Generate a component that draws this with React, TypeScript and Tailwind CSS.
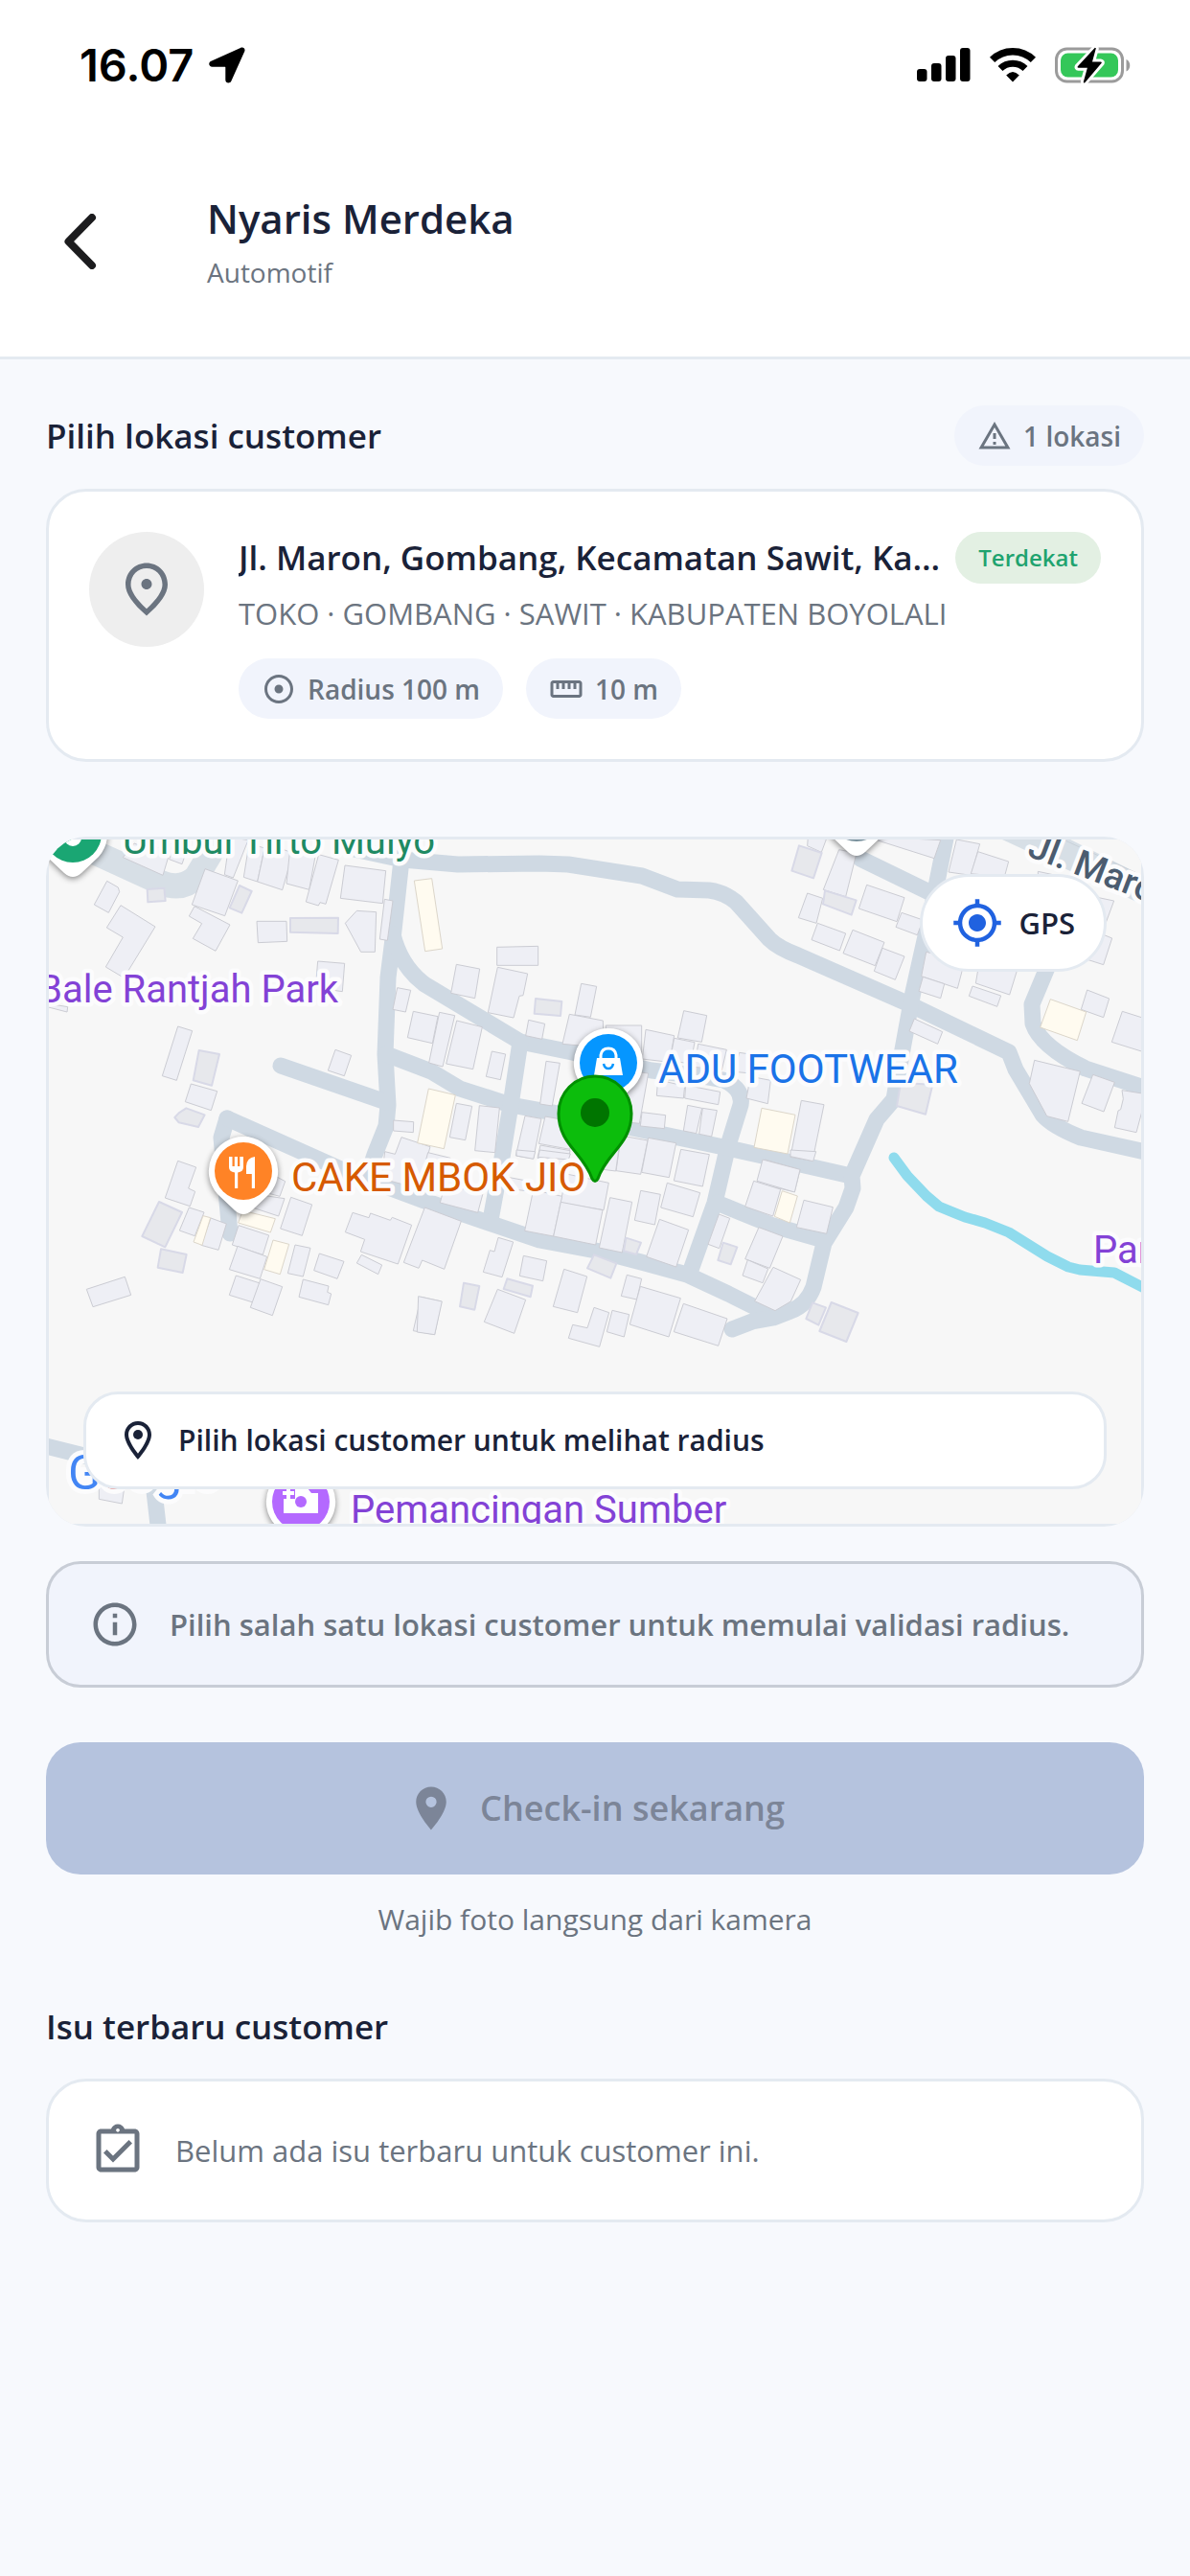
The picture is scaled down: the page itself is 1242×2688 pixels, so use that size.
import type { ReactNode } from "react";
import {
  MdGpsFixed,
  MdInfoOutline,
  MdLocationOn,
  MdOutlineAdjust,
  MdOutlineAssignmentTurnedIn,
  MdOutlineFmdGood,
  MdOutlineLocationOn,
  MdOutlineStraighten,
  MdOutlineWarningAmber,
} from "react-icons/md";

/* ---------- status bar ---------- */

function StatusBar() {
  return (
    <div className="flex h-[132px] items-start justify-between pt-[44px] pr-[61px] pl-[83px] text-black">
      <div className="flex h-12 items-center gap-4 font-[Inter,sans-serif] text-[47px] leading-[48px] font-semibold">
        <span>16.07</span>
        <svg viewBox="0 0 38 38" className="size-[38px]" fill="currentColor" aria-hidden="true">
          <path d="M33 .9C35.700-.4 38.300 1.500 37.300 4.600L23.400 35.500C22 38.600 17.300 38 17.300 34.300V21.300Q17.300 20.800 16.800 20.800H3.600C-.3 20.800-1 16.300 2.400 14.800Z" />
        </svg>
      </div>
      <div className="flex h-12 items-center gap-5">
        <svg viewBox="0 0 56 38" className="h-[38px] w-[56px]" fill="currentColor" aria-hidden="true">
          <rect x="0" y="23" width="10.500" height="13" rx="3" />
          <rect x="15" y="17" width="10.500" height="19" rx="3" />
          <rect x="30" y="9" width="10.500" height="27" rx="3" />
          <rect x="45" y="1" width="10.500" height="35" rx="3" />
        </svg>
        <svg viewBox="0 0 48 38" className="h-[38px] w-[48px]" fill="none" stroke="currentColor" aria-hidden="true">
          <path d="M2.600 13.400A30.500 30.500 0 0 1 45.400 13.400" strokeWidth="7.500" />
          <path d="M11 22.600A18.500 18.500 0 0 1 37 22.600" strokeWidth="7" />
          <path d="M24 36.500 17.200 29.600Q24 22.500 30.800 29.600Z" fill="currentColor" stroke="none" />
        </svg>
        <svg viewBox="0 0 80 38" className="h-[38px] w-[80px]" aria-hidden="true">
          <rect x="1.500" y="2" width="69" height="34" rx="11" fill="none" stroke="#9b9b9b" strokeWidth="3" />
          <path d="M74.500 13c5 2 5 10.500 0 12.500z" fill="#9b9b9b" />
          <rect x="6" y="6.500" width="60" height="25" rx="7.500" fill="#34c759" />
          <path
            d="M42.200.8 23.800 20.300q-.8 1.400.8 1.500h9.300L29.800 36q.3 1.800 1.700.5l17-19.400q.9-1.500-.9-1.700h-8.600L42.800 1.700z"
            stroke="#fff"
            strokeWidth="6"
            strokeLinejoin="round"
          />
          <path d="M41.800.8 23.800 20.300q-.8 1.400.8 1.500h9.300L29.800 36.500q.3 1.800 1.700.5l17-19.900q.9-1.500-.9-1.700h-8.600L42.900 1.300z" />
        </svg>
      </div>
    </div>
  );
}

/* ---------- map drawing ---------- */

const TILE = 1 / 3;

type Lot = { x: number; y: number; home?: string[]; shed?: string[]; shop?: string[] };

// Building outlines, grouped by block; every block has its own origin and is drawn at a third of its size.
const LOTS: Lot[] = [
  {
    x: 40,
    y: 860,
    home: [
      "215,178 250,198 254,212 220,277 175,252",
      "258,254 366,321 268,481 211,447 265,354 214,324",
      "522,140 625,177 584,287 481,252",
      "489,257 600,315 555,397 484,358 512,311 472,288",
      "600,40 657,50 610,168 583,158",
      "660,60 708,75 686,180 643,166",
      "712,60 797,90 764,206 686,180",
      "790,60 870,85 848,205 777,186",
      "878,95 940,112 900,250 882,245 877,255 838,243",
      "960,129 1088,146 1078,248 946,232",
      "997,271 1058,275 1054,400 1010,400 961,310",
      "1084,235 1110,240 1093,364 1069,360",
      "684,304 777,304 779,367 688,371",
      "875,429 959,436 952,524 868,512",
      "437,633 482,647 433,802 388,788",
      "478,813 560,836 541,896 460,869",
      "930,706 980,724 958,788 907,771",
      "437,1054 494,1074 470,1140 491,1150 475,1196 397,1170",
      "20,560 92,572 90,588 20,570",
      "300,60 352,80 420,60 390,160 265,104",
      "410,110 450,125 460,95 420,80",
      "1112,927 1175,932 1174,965 1112,960",
      "1137,980 1227,1010 1190,1140 1075,1110 1085,1025 1117,1033",
    ],
    shed: [
      "341,204 394,200 398,240 343,244",
      "630,192 668,210 637,278 599,262",
      "789,294 939,293 938,342 789,338",
      "503,708 567,720 543,818 485,802",
      "427,918 440,904 463,889 521,910 501,948 440,934",
    ],
    shop: ["1177,177 1232,170 1265,390 1211,398"],
  },
  {
    x: 400,
    y: 860,
    home: [
      "229,439 302,453 287,545 212,529",
      "358,448 452,468 438,536 426,538 408,606 328,590",
      "356,385 485,382 485,442 356,442",
      "455,613 506,625 497,673 446,662",
      "620,499 668,508 649,604 600,597",
      "583,595 688,615 690,700 561,688",
      "697,630 809,630 809,740 697,740",
      "822,643 911,662 896,745 811,735",
      "941,584 1013,599 997,682 922,669",
      "911,670 975,683 962,750 898,740",
      "986,688 1075,706 1060,770 975,760",
      "1115,715 1160,722 1150,780 1100,775",
      "1150,790 1213,802 1204,875 1137,858",
      "44,512 86,520 70,588 30,580",
      "94,586 171,602 154,686 76,668",
      "176,589 224,599 186,759 143,747",
      "230,615 310,635 281,767 197,750",
      "340,711 383,720 367,800 322,790",
      "510,742 553,748 529,882 491,876",
      "229,874 278,883 257,989 208,980",
      "301,881 364,888 350,1028 287,1022",
      "444,913 495,922 470,1047 415,1038",
      "507,915 590,930 585,1018 487,1000",
      "492,1005 585,1022 575,1080 483,1045",
      "860,800 944,820 940,858 856,850",
      "947,817 1055,838 1049,878 944,858",
      "953,880 998,889 980,968 940,960",
      "1000,889 1045,896 1028,978 989,970",
      "750,770 830,780 802,937 740,930",
      "810,902 884,911 880,953 805,945",
      "745,975 828,990 806,1096 729,1085",
      "830,982 917,998 895,1106 809,1090",
      "932,1018 1021,1034 1000,1134 910,1116",
      "690,1000 740,1000 728,1086 680,1080",
      "140,1028 210,1045 190,1110 120,1100",
      "574,1095 706,1123 690,1208 555,1185",
      "390,1105 470,1120 465,1150 380,1140",
    ],
    shed: ["477,546 559,555 555,600 473,593"],
    shop: ["142,828 226,848 190,1016 107,998", "1185,889 1290,910 1266,1032 1161,1012"],
  },
  {
    x: 800,
    y: 860,
    home: [
      "227,80 282,90 248,227 178,205",
      "130,40 188,45 172,88 128,68",
      "314,190 432,230 408,305 289,264",
      "128,216 176,232 156,310 100,293",
      "160,310 248,342 229,396 141,362",
      "270,331 369,370 340,443 240,404",
      "363,388 432,414 403,487 337,460",
      "423,277 490,300 472,347 405,322",
      "350,40 545,50 525,107 345,50",
      "595,48 668,62 640,160 570,150",
      "662,86 758,117 745,165 640,155",
      "500,400 620,430 598,514 485,476",
      "490,478 557,500 545,545 477,523",
      "665,440 790,440 761,534 655,498",
      "645,507 734,537 722,571 634,538",
      "1004,519 1073,546 1055,605 985,580",
      "1114,586 1190,610 1190,716 1081,682",
      "839,739 982,774 944,931 878,914 823,812",
      "1022,784 1090,808 1056,900 987,874",
      "1113,833 1190,845 1158,965 1090,950 1101,897 1109,893 1117,860",
      "463,609 551,650 536,688 447,648",
      "109,865 180,878 144,1054 75,1042",
      "1040,340 1082,357 1055,440 1005,424",
      "1040,230 1088,240 1062,310 1020,300",
      "850,148 930,165 930,200 850,200",
      "-5,1050 105,1082 88,1151 -30,1125",
    ],
    shed: [
      "102,67 173,90 147,169 79,146",
      "183,208 281,238 266,284 177,250",
      "420,810 520,815 498,908 408,882",
    ],
    shop: ["889,548 1001,588 973,677 857,636"],
  },
  {
    x: 40,
    y: 1200,
    home: [
      "472,180 519,195 490,269 442,252",
      "540,213 589,231 564,313 510,298",
      "791,148 857,171 826,268 758,246",
      "720,70 773,98 756,145 700,130",
      "690,140 771,152 752,207 670,180",
      "627,236 722,267 703,328 607,297",
      "624,301 716,334 694,403 598,374",
      "619,393 694,417 672,477 598,454",
      "696,404 764,428 733,518 664,493",
      "804,297 852,307 829,396 781,386",
      "880,324 957,349 936,403 863,377",
      "829,405 909,426 905,445 917,450 908,485 816,460",
      "151,436 271,397 290,454 171,491",
      "984,196 1035,212 1040,198 1102,220 1108,211 1169,235 1126,357 1009,318 1022,280 961,257",
      "1012,328 1076,360 1064,389 997,354",
      "1198,460 1262,474 1241,578 1174,566",
      "190,1050 268,1065 262,1107 190,1093",
    ],
    shed: ["378,162 450,195 397,304 325,270", "384,310 464,327 452,384 374,368"],
    shop: ["516,206 539,212 513,298 486,288", "640,190 742,215 727,258 626,228", "735,282 785,295 757,389 707,374"],
  },
  {
    x: 440,
    y: 1200,
    home: [
      "10,180 124,223 71,373 2,345 -9,370 -56,352",
      "240,274 287,288 252,398 193,382 214,314 228,318",
      "319,331 392,347 380,410 307,394",
      "446,373 518,396 488,509 412,490",
      "643,391 689,403 674,468 625,457",
      "685,427 811,464 774,585 652,546",
      "820,481 957,528 929,613 790,569",
      "238,436 326,469 290,574 196,538",
      "540,493 587,509 557,616 460,589 473,547 519,557",
      "597,502 650,515 634,585 580,569",
      "-10,458 64,474 41,578 -14,570",
      "350,125 440,145 413,270 323,253",
      "436,163 567,188 545,297 413,270",
      "590,149 659,163 628,321 556,306",
      "686,127 748,139 730,234 667,220",
      "769,103 872,134 850,209 749,180",
      "745,217 836,250 797,366 704,334",
      "70,120 195,125 176,196 58,165",
      "1068,30 1185,61 1168,132 1050,97",
      "1040,97 1124,123 1100,207 1013,177",
      "1197,157 1288,179 1268,262 1174,242",
      "931,201 965,214 932,308 897,295",
      "1056,242 1131,270 1090,370 1013,341",
      "1021,344 1085,372 1068,416 1005,393",
      "1101,367 1187,406 1156,474 1107,503 1043,473",
      "1155,0 1235,5 1226,35 1155,20",
      "297,0 356,5 350,28 297,18",
      "370,0 466,12 460,30 365,22",
    ],
    shed: [
      "132,416 181,426 166,500 120,490",
      "268,403 348,425 341,460 257,435",
      "640,275 687,290 672,327 633,316",
      "540,328 610,355 592,401 519,370",
      "944,290 988,304 968,358 928,345",
      "1224,478 1266,493 1243,548 1204,528",
      "1283,477 1367,510 1330,600 1246,567",
    ],
    shop: ["1129,128 1177,144 1153,228 1105,208"],
  },
];

const ROADS = [
  "M360 884 420 897 478 902 563 901 593 902 670 914 707 928 740 929Q756 931 768 941L803 980Q812 989 833 997L947 1047 1053 1098 1060 1116 1088 1163Q1098 1175 1128 1187L1200 1203",
  "M419 897 410 980 405 1020 402 1100 405 1153 403 1175 391 1205 384 1226",
  "M410 975Q418 1008 443 1027L493 1057 543 1087 597 1098 680 1117 733 1123 755 1127Q776 1136 773 1153L760 1195 746 1255 720 1328",
  "M403 1100 450 1118 480 1136 533 1153 583 1162 660 1177 760 1198 800 1207 888 1227",
  "M543 1087 533 1153 524 1208 512 1273",
  "M237 1167 231 1187 240 1287",
  "M237 1167 340 1213 360 1222 443 1253 507 1275 563 1294 627 1306 673 1318 717 1330 760 1350 800 1370",
  "M293 1112 403 1150",
  "M988 870 972 950 953 1035 942 1095 933 1147 915 1168 889 1227 890 1240 883 1260 860 1297 849 1343Q842 1362 825 1368L807 1375 785 1379 764 1387",
  "M748 1255 807 1279 860 1294",
  "M898 896 972 932",
  "M1100 993 1077 1048 1078 1068Q1086 1092 1133 1115L1200 1137",
  "M40 1507 100 1522 150 1540",
  "M158 1530 166 1600",
];

function Buildings({ lot }: { lot: Lot }) {
  return (
    <g transform={`translate(${lot.x} ${lot.y}) scale(${TILE})`}>
      <g fill="#eeeff5" stroke="#cbccd3" strokeWidth="3">
        {lot.home?.map((p) => <polygon key={p} points={p} />)}
      </g>
      <g fill="#e7e8ec" stroke="#d8d9e7" strokeWidth="6" strokeLinejoin="round">
        {lot.shed?.map((p) => <polygon key={p} points={p} />)}
      </g>
      <g fill="#fffbf0" stroke="#dcd6ca" strokeWidth="3">
        {lot.shop?.map((p) => <polygon key={p} points={p} />)}
      </g>
    </g>
  );
}

function PlacePin({ x, y, color, children }: { x: number; y: number; color: string; children?: ReactNode }) {
  return (
    <g transform={`translate(${x} ${y})`}>
      <path
        d="M0-36A36 36 0 0 1 27 24L9 41Q0 49-9 41L-27 24A36 36 0 0 1 0-36Z"
        fill="#fff"
        className="drop-shadow-[0_2px_3px_rgba(0,0,0,0.45)]"
      />
      <circle r="30" fill={color} />
      {children}
    </g>
  );
}

function MapLabel({ x, y, color, children }: { x: number; y: number; color: string; children: string }) {
  return (
    <text x={x} y={y} fill={color} stroke="#fcfcfd" strokeWidth="9" strokeLinejoin="round" paintOrder="stroke">
      {children}
    </text>
  );
}

function MapDrawing() {
  return (
    <svg
      viewBox="51 876 1140 714"
      preserveAspectRatio="xMidYMid slice"
      className="block h-full w-full bg-[#f7f7f7] font-[Roboto,sans-serif] text-[40px]"
      role="img"
      aria-label="Peta lokasi customer"
    >
      <path d="M100 890 168 921Q190 930 205 915L232 870" fill="none" stroke="#d7dfe6" strokeWidth="26" />
      <path d="M1033 870H1105L1195 915V945Z" fill="#d7dfe6" />
      <path d="M1105 874 1195 915" stroke="#c9d1d9" />
      <g fill="none" stroke="#cfd9e3" strokeWidth="17" strokeLinecap="round" strokeLinejoin="round">
        {ROADS.map((d) => (
          <path key={d} d={d} />
        ))}
      </g>
      <path
        d="M933 1208 947 1227 967 1248 980 1259 1007 1270 1028 1276 1053 1286 1093 1311 1115 1322 1127 1325 1163 1328 1200 1347"
        fill="none"
        stroke="#8fdbed"
        strokeWidth="11"
        strokeLinecap="round"
        strokeLinejoin="round"
      />
      {LOTS.map((lot) => (
        <Buildings key={`${lot.x}-${lot.y}`} lot={lot} />
      ))}

      <PlacePin x={76} y={870} color="#1aa673">
        <circle cy="4" r="9" fill="#fff" />
      </PlacePin>
      <PlacePin x={894} y={848} color="#78909c" />
      <PlacePin x={314} y={1567} color="#b469ff">
        <path d="M-18-9H-6V-14H7L11-9H18V12H-18Z" fill="#fff" />
        <circle r="6" fill="#b469ff" />
        <path d="M-20-16H-6V-3H-20Z" fill="#b469ff" />
        <path d="M-15-15H-11V-11H-7V-7H-11V-3H-15V-7H-19V-11H-15Z" fill="#fff" />
      </PlacePin>
      <PlacePin x={254} y={1222} color="#ff8326">
        <path
          d="M-15-15h3.500v10h2.300v-10h3.200v10h2.300v-10H0V-4Q0 .5-5.800 1.500V18h-3.200V1.500Q-15 .5-15-4ZM12-15V18H8.800V3H3V-5Q3.500-14 12-15Z"
          fill="#fff"
        />
      </PlacePin>
      <PlacePin x={635} y={1109} color="#0596ff">
        <path d="M-12-5H12L15 13H-15Z" fill="#fff" />
        <path d="M-8-5V-8Q-7-15 0-15T8-8V-5" fill="none" stroke="#fff" strokeWidth="3" />
        <path d="M-5 1Q-4 6 0 6T5 1" fill="none" stroke="#0596ff" strokeWidth="2.500" />
      </PlacePin>

      <MapLabel x={128} y={891} color="#1f8a63">Umbul Tirto Mulyo</MapLabel>
      <MapLabel x={40} y={1046} color="#8342d6">Bale Rantjah Park</MapLabel>
      <MapLabel x={1141} y={1318} color="#8342d6">Pancingan</MapLabel>
      <MapLabel x={366} y={1589} color="#8342d6">Pemancingan Sumber</MapLabel>
      <g className="text-[42px]">
        <MapLabel x={687} y={1130} color="#1a73e8">ADU FOOTWEAR</MapLabel>
        <MapLabel x={304} y={1243} color="#d65a00">CAKE MBOK JIO</MapLabel>
      </g>
      <g transform="rotate(21 1072 893)" className="text-[38px] font-medium">
        <MapLabel x={1071} y={893} color="#4b5c70">Jl. Maron</MapLabel>
      </g>

      <path
        d="M621 1123C642 1123 659 1140 659 1162 659 1194 633 1203 624 1230Q621 1235 618 1230C609 1203 583 1194 583 1162 583 1140 600 1123 621 1123Z"
        fill="#0cbd0c"
        stroke="#009000"
        strokeWidth="3"
      />
      <circle cx="621" cy="1161" r="15" fill="#007500" />

      <text x="71" y="1554" className="text-[50px]" stroke="#fcfcfd" strokeWidth="10" paintOrder="stroke">
        <tspan fill="#4285f4">G</tspan>
        <tspan fill="#ea4335">o</tspan>
        <tspan fill="#fbbc04">o</tspan>
        <tspan fill="#4285f4">g</tspan>
        <tspan fill="#34a853">l</tspan>
        <tspan fill="#ea4335">e</tspan>
      </text>
    </svg>
  );
}

/* ---------- page ---------- */

function Chip({ icon, children }: { icon: ReactNode; children: string }) {
  return (
    <span className="flex h-[63px] items-center gap-3 rounded-full bg-[#f1f4fc] px-6 text-[28px] leading-9 font-semibold whitespace-nowrap text-[#6b7480]">
      {icon}
      <span>{children}</span>
    </span>
  );
}

export default function App() {
  return (
    <div className="min-h-screen bg-[#f7f9fd] font-['Open_Sans',sans-serif] text-[#1a2238]">
      <header className="border-b-[3px] border-[#e4eaf1] bg-white">
        <StatusBar />
        <div className="flex h-[240px] items-center gap-[84px] pl-[36px]">
          <button type="button" aria-label="Kembali" className="flex size-24 items-center justify-center">
            <svg viewBox="0 0 34 58" className="h-[58px] w-[34px]" fill="none" stroke="#1c1c1e" strokeWidth="8" strokeLinecap="round" strokeLinejoin="round" aria-hidden="true">
              <path d="M29 4 4.500 29 29 54" />
            </svg>
          </button>
          <div>
            <h1 className="text-[42px] leading-[64px] font-semibold">Nyaris Merdeka</h1>
            <p className="text-[28px] leading-[48px] text-[#6b7480]">Automotif</p>
          </div>
        </div>
      </header>

      <main className="px-12 pt-12 pb-24">
        <div className="flex items-center justify-between">
          <h2 className="text-[35px] leading-[48px] font-semibold">Pilih lokasi customer</h2>
          <Chip icon={<MdOutlineWarningAmber className="size-9" />}>1 lokasi</Chip>
        </div>

        <button
          type="button"
          className="mt-6 flex w-full items-start gap-9 rounded-[42px] border-[3px] border-[#e4eaf1] bg-white p-[42px] text-left"
        >
          <span className="flex size-[120px] shrink-0 items-center justify-center rounded-full bg-[#eeeeee] text-[#6b7480]">
            <MdOutlineFmdGood className="size-[66px]" />
          </span>
          <span className="block min-w-0 flex-1">
            <span className="flex items-center gap-3">
              <span className="flex-1 truncate text-[35px] leading-[54px] font-semibold">
                Jl. Maron, Gombang, Kecamatan Sawit, Kabupaten Boyolali
              </span>
              <span className="flex h-[54px] items-center rounded-full bg-[#e3f0e3] px-6 text-[24px] leading-8 font-semibold text-[#1fa36f]">
                Terdekat
              </span>
            </span>
            <span className="mt-2 block truncate text-[31px] leading-[46px] text-[#6b7480]">
              TOKO · GOMBANG · SAWIT · KABUPATEN BOYOLALI
            </span>
            <span className="mt-6 flex gap-6">
              <Chip icon={<MdOutlineAdjust className="size-9" />}>Radius 100 m</Chip>
              <Chip icon={<MdOutlineStraighten className="size-9" />}>10 m</Chip>
            </span>
          </span>
        </button>

        <section aria-label="Peta" className="relative mt-[78px] h-[720px] overflow-hidden rounded-[42px] bg-[#e4eaf1] p-[3px]">
          <MapDrawing />
          <button
            type="button"
            className="absolute top-[39px] right-[39px] flex h-[102px] items-center gap-4 rounded-full border-[3px] border-[#e4eaf1] bg-white px-[30px] text-[31px] leading-10 font-semibold"
          >
            <MdGpsFixed className="size-[54px] text-[#2062e0]" />
            <span>GPS</span>
          </button>
          <div className="absolute inset-x-[39px] bottom-[39px] flex h-[102px] items-center gap-[18px] rounded-[36px] border-[3px] border-[#e4eaf1] bg-white px-[30px]">
            <MdOutlineLocationOn className="size-12" />
            <p className="text-[30px] leading-10 font-semibold">Pilih lokasi customer untuk melihat radius</p>
          </div>
        </section>

        <div role="status" className="mt-9 flex min-h-[132px] items-center gap-[30px] rounded-[36px] border-[3px] border-[#c8cdd6] bg-[#f1f4fc] px-[42px] text-[#6b7480]">
          <MdInfoOutline className="size-[54px] shrink-0" />
          <p className="text-[31px] leading-10 font-semibold">
            Pilih salah satu lokasi customer untuk memulai validasi radius.
          </p>
        </div>

        <button
          type="button"
          disabled
          className="mt-[57px] flex h-[138px] w-full items-center justify-center gap-6 rounded-[36px] bg-[#b5c3de] text-[#7c8598]"
        >
          <MdLocationOn className="size-[54px]" />
          <span className="text-[36px] leading-[48px] font-semibold">Check-in sekarang</span>
        </button>
        <p className="mt-6 text-center text-[30px] leading-[46px] text-[#6b7480]">Wajib foto langsung dari kamera</p>

        <h2 className="mt-[65px] text-[35px] leading-[48px] font-semibold">Isu terbaru customer</h2>
        <div className="mt-[30px] flex min-h-[150px] items-center gap-[30px] rounded-[42px] border-[3px] border-[#e4eaf1] bg-white px-[42px] text-[#6b7480]">
          <MdOutlineAssignmentTurnedIn className="size-[60px] shrink-0" />
          <p className="text-[31px] leading-[46px]">Belum ada isu terbaru untuk customer ini.</p>
        </div>
      </main>
    </div>
  );
}
